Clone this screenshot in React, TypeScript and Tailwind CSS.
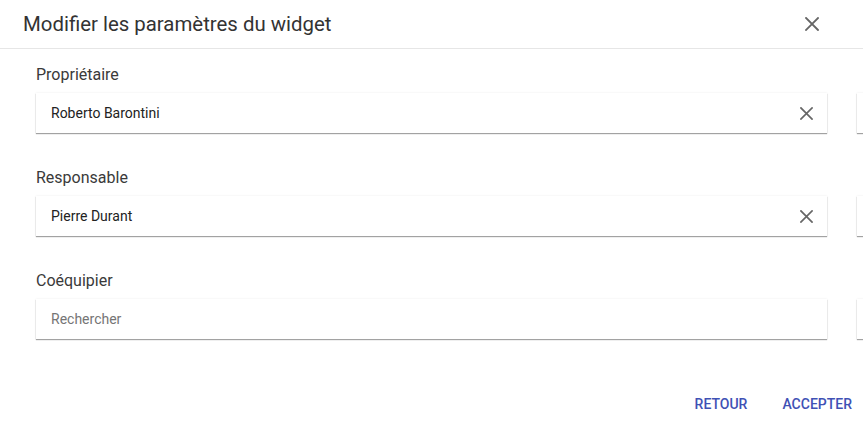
import React from 'react';

const font = { fontFamily: 'Roboto, "Liberation Sans", sans-serif' };

const CloseIcon = ({ size = 14, stroke = 2 }: { size?: number; stroke?: number }) => (
    <svg width={size} height={size} viewBox="0 0 14 14" fill="none">
        <path d="M1 1L13 13M13 1L1 13" stroke="currentColor" strokeWidth={stroke} strokeLinecap="square" />
    </svg>
);

interface FieldProps {
    label: string;
    value?: string;
    placeholder?: string;
}

const Field: React.FC<FieldProps> = ({ label, value, placeholder }) => (
    <div className="flex flex-col">
        <label className="h-[20px] text-[16px] leading-[20px] text-[#3a3a3a] mb-[8px]">{label}</label>
        <div className="h-[40px] bg-white flex items-center justify-between pl-[15px] pr-[14px] shadow-[0_1px_1px_rgba(0,0,0,0.35),0_0_2px_rgba(0,0,0,0.08)]">
            {value ? (
                <span className="text-[14px] text-[#222]">{value}</span>
            ) : (
                <span className="text-[14px] text-[#757575]">{placeholder}</span>
            )}
            {value && (
                <button className="text-[#666] flex items-center">
                    <CloseIcon size={13} stroke={1.8} />
                </button>
            )}
        </div>
    </div>
);

// second column lies past the dialog's right edge, only the field edges peek in
const SideColumn: React.FC = () => (
    <div className="w-[791px] shrink-0 flex flex-col gap-[35px]">
        <Field label="" value=" " />
        <Field label="" value=" " />
        <Field label="" placeholder="" />
    </div>
);

export default function App() {
    return (
        <div className="w-[863px] h-[422px] bg-white overflow-hidden flex flex-col" style={font}>
            {/* Header */}
            <div className="h-[49px] flex items-center justify-between pl-[23px] pr-[44px] border-b border-[#e6e6e6] shrink-0">
                <h2 className="text-[20.4px] text-[#333] leading-none">Modifier les paramètres du widget</h2>
                <button className="text-[#666] flex items-center">
                    <CloseIcon size={14} stroke={1.8} />
                </button>
            </div>

            {/* Content */}
            <div className="flex items-start gap-[30px] pl-[36px] pt-[16px] pb-[4px] shrink-0 overflow-hidden">
                <div className="w-[791px] shrink-0 flex flex-col gap-[35px]">
                    <Field label="Propriétaire" value="Roberto Barontini" />
                    <Field label="Responsable" value="Pierre Durant" />
                    <Field label="Coéquipier" placeholder="Rechercher" />
                </div>
                <SideColumn />
            </div>

            {/* Actions */}
            <div className="flex justify-end items-center gap-[19px] pr-[3px] mt-[45px]">
                <button className="text-[14px] leading-[21px] font-medium text-[#3f51b5] px-[8px] py-[6px] uppercase">Retour</button>
                <button className="text-[14px] leading-[21px] font-medium text-[#3f51b5] px-[8px] py-[6px] uppercase">Accepter</button>
            </div>
        </div>
    );
}
